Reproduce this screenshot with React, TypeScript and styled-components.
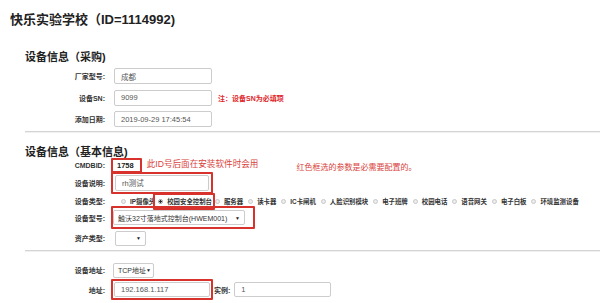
import React from 'react';
import styled, { createGlobalStyle } from 'styled-components';

const GlobalStyle = createGlobalStyle`
  html, body {
    margin: 0;
    padding: 0;
    background: #fff;
    overflow: hidden;
  }
  body {
    font-family: "Liberation Sans", "Noto Sans CJK SC", sans-serif;
    color: #333;
  }
`;

const RED = '#d8322c';

const radioItems = [
  { label: 'IP摄像头' },
  { label: '校园安全控制台', checked: true, boxed: true },
  { label: '服务器' },
  { label: '读卡器' },
  { label: 'IC卡闸机' },
  { label: '人脸识别模块' },
  { label: '电子班牌' },
  { label: '校园电话' },
  { label: '语音网关' },
  { label: '电子白板' },
  { label: '环境监测设备' },
];

const Page = styled.div`
  width: 600px;
  height: 303px;
  display: flex;
  flex-direction: column;
`;

const Title = styled.h1`
  margin: 0;
  height: 36px;
  display: flex;
  align-items: center;
  padding-left: 10px;
  font-size: 13px;
  font-weight: 700;
  color: #222;
`;

const SectionTitle = styled.h2<{ $top: number; $h: number }>`
  margin: ${(p) => p.$top}px 0 0;
  height: ${(p) => p.$h}px;
  display: flex;
  align-items: center;
  padding-left: 25px;
  font-size: 11px;
  font-weight: 700;
  color: #222;
`;

const Row = styled.div<{ $h: number; $top?: number }>`
  height: ${(p) => p.$h}px;
  margin-top: ${(p) => p.$top || 0}px;
  display: flex;
  align-items: center;
  padding-left: 25px;
  white-space: nowrap;
`;

const Label = styled.span`
  width: 80px;
  flex-shrink: 0;
  margin-right: 6px;
  text-align: right;
  font-size: 7px;
  font-weight: 700;
  color: #333;
`;

const InlineLabel = styled.span`
  font-size: 7px;
  font-weight: 700;
  color: #333;
  margin: 0 4px 0 1px;
`;

const Field = styled.input<{ $w: number; $h?: number; $indent?: number }>`
  box-sizing: border-box;
  width: ${(p) => p.$w}px;
  height: ${(p) => p.$h || 16}px;
  margin-left: ${(p) => p.$indent ?? 0}px;
  padding: 0 6px;
  border: 1px solid #ccc;
  border-radius: 2px;
  background: #fff;
  font-family: inherit;
  font-size: 7.5px;
  color: #555;
  outline: none;
`;

const Select = styled.div<{ $w: number; $indent?: number }>`
  box-sizing: border-box;
  width: ${(p) => p.$w}px;
  height: 15px;
  margin-left: ${(p) => p.$indent ?? 0}px;
  padding: 0 4px;
  display: flex;
  align-items: center;
  justify-content: space-between;
  border: 1px solid #ccc;
  border-radius: 2px;
  font-size: 7px;
  color: #333;
`;

const Arrow = styled.span`
  font-size: 5px;
  color: #222;
`;

const RedBox = styled.div<{ $pad?: string; $ml?: number }>`
  box-sizing: border-box;
  display: flex;
  align-items: center;
  padding: ${(p) => p.$pad || '1px'};
  margin-left: ${(p) => p.$ml || 0}px;
  border: 2px solid ${RED};
  border-radius: 1px;
`;

const IdValue = styled.span`
  font-size: 7.5px;
  font-weight: 700;
  color: #222;
  padding: 0 4px 0 2px;
`;

const Note = styled.span<{ $size: number; $bold?: boolean; $ml: number; $dy?: number }>`
  font-size: ${(p) => p.$size}px;
  font-weight: ${(p) => (p.$bold ? 700 : 400)};
  color: ${(p) => (p.$bold ? '#e0262a' : '#d9423c')};
  margin-left: ${(p) => p.$ml}px;
  position: relative;
  top: ${(p) => p.$dy || 0}px;
`;

const RadioGroup = styled.div`
  display: flex;
  align-items: center;
  margin-left: 10px;
`;

const RadioItem = styled.span<{ $last?: boolean }>`
  display: flex;
  align-items: center;
  margin-right: ${(p) => (p.$last ? 0 : 5)}px;
  font-size: 6.4px;
  font-weight: 700;
  color: #333;
`;

const Dot = styled.span<{ $on?: boolean }>`
  box-sizing: border-box;
  width: 5px;
  height: 5px;
  margin-right: 4px;
  border-radius: 50%;
  border: 1px solid ${(p) => (p.$on ? '#999' : '#c8c8c8')};
  background: ${(p) => (p.$on ? 'radial-gradient(circle, #333 0 1.2px, #fff 1.4px)' : '#ececec')};
`;

const Divider = styled.hr<{ $top: number }>`
  margin: ${(p) => p.$top}px 0 0 25px;
  height: 0;
  border: 0;
  border-top: 1px solid #d4d4d4;
  border-bottom: 1px solid #f0f0f0;
`;

const App: React.FC = () => {
  return (
    <Page>
      <GlobalStyle />
      <Title>快乐实验学校（ID=1114992)</Title>

      <SectionTitle $top={10} $h={19}>设备信息（采购)</SectionTitle>
      <Row $h={22}>
        <Label>厂家型号:</Label>
        <Field $w={98} $indent={3} readOnly defaultValue="成都" />
      </Row>
      <Row $h={21}>
        <Label>设备SN:</Label>
        <Field $w={98} $indent={3} readOnly defaultValue="9099" />
        <Note $size={7} $bold $ml={6}>注：设备SN为必填项</Note>
      </Row>
      <Row $h={22}>
        <Label>添加日期:</Label>
        <Field $w={98} $indent={3} readOnly defaultValue="2019-09-29 17:45:54" />
      </Row>

      <Divider $top={1} />

      <SectionTitle $top={11} $h={14}>设备信息（基本信息)</SectionTitle>
      <Row $h={14}>
        <Label>CMDBID:</Label>
        <RedBox $pad="1px 2px">
          <IdValue>1758</IdValue>
        </RedBox>
        <Note $size={8.6} $ml={5} $dy={-2}>此ID号后面在安装软件时会用</Note>
        <Note $size={8} $ml={38} $dy={1}>红色框选的参数是必需要配置的。</Note>
      </Row>
      <Row $h={21}>
        <Label>设备说明:</Label>
        <RedBox $pad="1px 2px">
          <Field $w={94} $h={16} readOnly defaultValue="rh测试" />
        </RedBox>
      </Row>
      <Row $h={16}>
        <Label>设备类型:</Label>
        <RadioGroup>
          {radioItems.map((item, idx) =>
            item.boxed ? (
              <RedBox key={item.label} $pad="2px 1px 2px 3px" $ml={-7}>
                <RadioItem $last>
                  <Dot $on={item.checked} />
                  {item.label}
                </RadioItem>
              </RedBox>
            ) : (
              <RadioItem key={item.label} $last={idx === radioItems.length - 1}>
                <Dot $on={item.checked} />
                {item.label}
              </RadioItem>
            )
          )}
        </RadioGroup>
      </Row>
      <Row $h={17}>
        <Label>设备型号:</Label>
        <RedBox $pad="2px 8px 2px 0">
          <Select $w={132}>
            触沃32寸落地式控制台(HWEM001)
            <Arrow>▼</Arrow>
          </Select>
        </RedBox>
      </Row>
      <Row $h={24}>
        <Label>资产类型:</Label>
        <Select $w={31} $indent={4}>
          <span />
          <Arrow>▼</Arrow>
        </Select>
      </Row>

      <Divider $top={0} />

      <Row $h={20} $top={8}>
        <Label>设备地址:</Label>
        <Select $w={41} $indent={2}>
          TCP地址
          <Arrow>▼</Arrow>
        </Select>
      </Row>
      <Row $h={19}>
        <Label>地址:</Label>
        <RedBox $pad="1px">
          <Field $w={96} $h={15} readOnly defaultValue="192.168.1.117" />
        </RedBox>
        <InlineLabel>实例:</InlineLabel>
        <Field $w={97} $h={15} readOnly defaultValue="1" />
      </Row>
    </Page>
  );
};

export default App;
